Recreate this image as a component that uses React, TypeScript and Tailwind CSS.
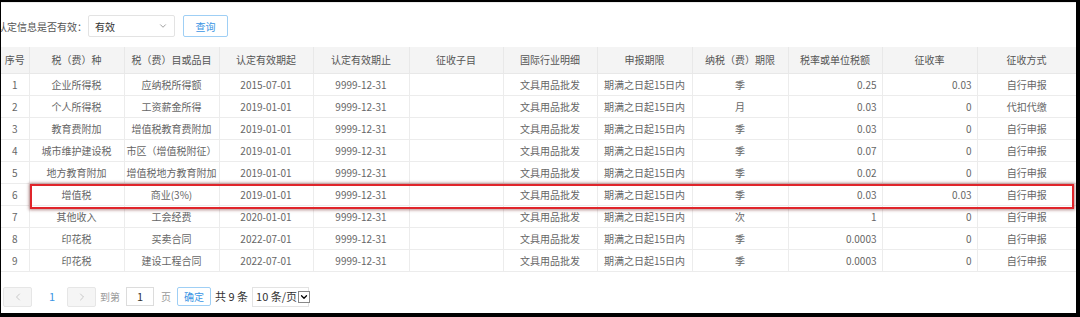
import { ChevronDown, ChevronLeft, ChevronRight } from "lucide-react";

type Row = {
  no: number;
  kind: string;
  item: string;
  start: string;
  end: string;
  sub: string;
  industry: string;
  deadline: string;
  period: string;
  rate: string;
  levy: string;
  method: string;
};

const rows: Row[] = [
  { no: 1, kind: "企业所得税", item: "应纳税所得额", start: "2015-07-01", end: "9999-12-31", sub: "", industry: "文具用品批发", deadline: "期满之日起15日内", period: "季", rate: "0.25", levy: "0.03", method: "自行申报" },
  { no: 2, kind: "个人所得税", item: "工资薪金所得", start: "2019-01-01", end: "9999-12-31", sub: "", industry: "文具用品批发", deadline: "期满之日起15日内", period: "月", rate: "0.03", levy: "0", method: "代扣代缴" },
  { no: 3, kind: "教育费附加", item: "增值税教育费附加", start: "2019-01-01", end: "9999-12-31", sub: "", industry: "文具用品批发", deadline: "期满之日起15日内", period: "季", rate: "0.03", levy: "0", method: "自行申报" },
  { no: 4, kind: "城市维护建设税", item: "市区（增值税附征）", start: "2019-01-01", end: "9999-12-31", sub: "", industry: "文具用品批发", deadline: "期满之日起15日内", period: "季", rate: "0.07", levy: "0", method: "自行申报" },
  { no: 5, kind: "地方教育附加", item: "增值税地方教育附加", start: "2019-01-01", end: "9999-12-31", sub: "", industry: "文具用品批发", deadline: "期满之日起15日内", period: "季", rate: "0.02", levy: "0", method: "自行申报" },
  { no: 6, kind: "增值税", item: "商业(3%)", start: "2019-01-01", end: "9999-12-31", sub: "", industry: "文具用品批发", deadline: "期满之日起15日内", period: "季", rate: "0.03", levy: "0.03", method: "自行申报" },
  { no: 7, kind: "其他收入", item: "工会经费", start: "2020-01-01", end: "9999-12-31", sub: "", industry: "文具用品批发", deadline: "期满之日起15日内", period: "次", rate: "1", levy: "0", method: "自行申报" },
  { no: 8, kind: "印花税", item: "买卖合同", start: "2022-07-01", end: "9999-12-31", sub: "", industry: "文具用品批发", deadline: "期满之日起15日内", period: "季", rate: "0.0003", levy: "0", method: "自行申报" },
  { no: 9, kind: "印花税", item: "建设工程合同", start: "2022-07-01", end: "9999-12-31", sub: "", industry: "文具用品批发", deadline: "期满之日起15日内", period: "季", rate: "0.0003", levy: "0", method: "自行申报" },
];

const headers = [
  "序号",
  "税（费）种",
  "税（费）目或品目",
  "认定有效期起",
  "认定有效期止",
  "征收子目",
  "国际行业明细",
  "申报期限",
  "纳税（费）期限",
  "税率或单位税额",
  "征收率",
  "征收方式",
];

const widths = [28, 95, 95, 94, 96, 94, 94, 95, 96, 94, 95, 99];

export default function App() {
  return (
    <div
      className="relative h-[317px] w-[1080px] overflow-hidden border-t-2 border-r-4 border-b-4 border-l border-black bg-white text-[10px] text-[#666]"
      style={{ fontFamily: '"Noto Sans CJK SC", "Microsoft YaHei", sans-serif' }}
    >
      <div className="h-full border-t border-[#ececec]">
        {/* filter */}
        <div className="mt-[12px] flex h-[22px] items-center">
          <span className="-ml-[4px] whitespace-nowrap text-[10px] text-[#555]">认定信息是否有效：</span>
          <div className="ml-[1px] flex h-[22px] w-[87px] items-center justify-between rounded-[2px] border border-[#e3e3e3] pr-[6px] pl-[6px] text-[#333]">
            <span>有效</span>
            <ChevronDown className="h-[10px] w-[10px] text-[#666]" strokeWidth={1.5} />
          </div>
          <button className="ml-[8px] flex h-[22px] w-[45px] items-center justify-center rounded-[2px] border border-[#9fcff5] text-[10px] text-[#3a95e4]">
            查询
          </button>
        </div>

        {/* table */}
        <table className="mt-[10px] w-[1075px] table-fixed border-collapse">
          <colgroup>
            {widths.map((w, i) => (
              <col key={i} style={{ width: w }} />
            ))}
          </colgroup>
          <thead>
            <tr className="h-[26px] bg-[#f4f4f4]">
              {headers.map((h) => (
                <th
                  key={h}
                  className="border-r border-b border-[#e8e8e8] p-0 text-center font-normal whitespace-nowrap text-[#555]"
                >
                  {h}
                </th>
              ))}
            </tr>
          </thead>
          <tbody>
            {rows.map((r) => (
              <tr key={r.no} className="h-[22px]">
                <td className="border-r border-b border-[#ececec] p-0 text-center">{r.no}</td>
                <td className="border-r border-b border-[#ececec] p-0 text-center whitespace-nowrap">{r.kind}</td>
                <td className="border-r border-b border-[#ececec] p-0 text-center whitespace-nowrap">{r.item}</td>
                <td className="border-r border-b border-[#ececec] p-0 text-center">{r.start}</td>
                <td className="border-r border-b border-[#ececec] p-0 text-center">{r.end}</td>
                <td className="border-r border-b border-[#ececec] p-0 text-center">{r.sub}</td>
                <td className="border-r border-b border-[#ececec] p-0 text-center whitespace-nowrap">{r.industry}</td>
                <td className="border-r border-b border-[#ececec] p-0 text-center whitespace-nowrap">{r.deadline}</td>
                <td className="border-r border-b border-[#ececec] p-0 text-center">{r.period}</td>
                <td className="border-r border-b border-[#ececec] p-0 pr-[5px] text-right">{r.rate}</td>
                <td className="border-r border-b border-[#ececec] p-0 pr-[5px] text-right">{r.levy}</td>
                <td className="border-b border-[#ececec] p-0 text-center">{r.method}</td>
              </tr>
            ))}
          </tbody>
        </table>

        {/* pagination */}
        <div className="mt-[15px] flex h-[20px] items-center text-[10px]">
          <button className="ml-[2px] flex h-[20px] w-[29px] items-center justify-center rounded-[2px] border border-[#e6e6e6] bg-[#f5f5f5] text-[#aaa]">
            <ChevronLeft className="h-[12px] w-[12px]" strokeWidth={1.2} />
          </button>
          <span className="ml-[17px] w-[18px] text-[11px] text-[#3a95e4]">1</span>
          <button className="flex h-[20px] w-[29px] items-center justify-center rounded-[2px] border border-[#e6e6e6] bg-[#f5f5f5] text-[#aaa]">
            <ChevronRight className="h-[12px] w-[12px]" strokeWidth={1.2} />
          </button>
          <span className="ml-[4px] text-[#999]">到第</span>
          <div className="ml-[6px] flex h-[19px] w-[28px] items-center justify-center border border-[#dcdcdc] text-[11px] text-[#333]">1</div>
          <span className="ml-[7px] text-[#999]">页</span>
          <button className="ml-[6px] flex h-[19px] w-[34px] items-center justify-center rounded-[2px] border border-[#9fcff5] text-[#3a95e4]">
            确定
          </button>
          <span className="ml-[4px] whitespace-nowrap text-[11px] text-[#333]">共 9 条</span>
          <div className="ml-[4px] flex h-[20px] w-[57px] items-center border border-[#e3e3e3] pl-[3px] text-[11px] text-[#333]">
            <span className="whitespace-nowrap">10 条/页</span>
            <span className="ml-[1px] flex h-[12px] w-[12px] items-center justify-center border border-[#888] bg-white">
              <ChevronDown className="h-[10px] w-[10px] text-black" strokeWidth={3} />
            </span>
          </div>
        </div>
      </div>

      {/* highlight */}
      <div className="pointer-events-none absolute top-[182px] left-[29px] h-[25px] w-[1044px] border-2 border-[#e0252b] shadow-[0_0_3px_1px_rgba(90,0,0,0.45)]" />
    </div>
  );
}
